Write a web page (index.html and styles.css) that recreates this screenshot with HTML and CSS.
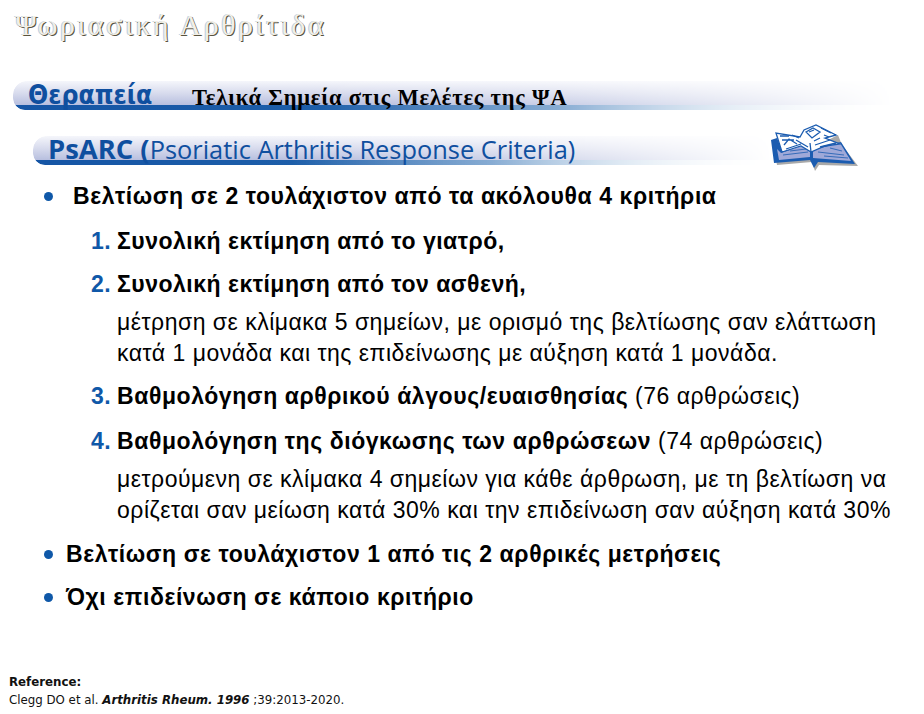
FILE: index.html
```html
<!DOCTYPE html>
<html lang="el">
<head>
<meta charset="utf-8">
<title>Ψωριασική Αρθρίτιδα</title>
<link rel="stylesheet" href="styles.css">
</head>
<body>
<div class="slide">
  <h1 class="title">Ψωριασική Αρθρίτιδα</h1>
  <div class="band band-main">
    <span class="band-heading">Θεραπεία</span>
    <span class="band-sub">Τελικά Σημεία στις Μελέτες της ΨΑ</span>
  </div>
  <div class="band band-second">
    <span class="second-text"><b>PsARC (</b>Psoriatic Arthritis Response Criteria)</span>
    <svg class="book" viewBox="0 0 94 54" width="94" height="54" aria-hidden="true">
      <path d="M70 15 L74 25 L90 46 L51 45 L47 51 L44 42 L9 45 L8 40 L60 20Z" fill="#a9a9a9"/>
      <path d="M3 20 L6 43 L42 40 L46 48 L50 42 L87 44 L73 22 L45 28 L14 30 L9 18Z" fill="#1b5cb0"/>
      <path d="M9 29 L11 40 L42 37 L42 30 L33 26 L13 33Z" fill="#9fa9d8"/>
      <path d="M45 30 L45 38 L83 41 L72 23Z" fill="#9fa9d8"/>
      <path d="M8 13 L14 32 L33 26 L43 32 L57 26 L72 24 L57 18 L68 15 L48 5 L36 10 L32 17Z" fill="#fff" stroke="#1b5cb0" stroke-width="1.3"/>
      <path d="M12 16 H21 M24 15 L31 18 M14 20 H26 M16 25 L21 19 L29 24 M18 29 L33 24 M28 20 L40 27 M38 12 L45 8 L52 12 L44 18Z M41 12 L46 10 M53 8 L63 13 M46 21 L52 18 M47 25 L62 20 M52 27 L68 23 M56 15 L61 17 M43 32 L42 23" fill="none" stroke="#1b5cb0" stroke-width="1.3"/>
      <path d="M15 35 L40 32 M22 31 L38 29 M50 32 L76 35 M62 28 L74 31 M56 36 L80 38" stroke="#1b5cb0" stroke-width="0.8"/>
    </svg>
  </div>
  <ul class="points">
    <li class="point point-first"><span class="dot"></span><span class="strong">Βελτίωση σε 2 τουλάχιστον από τα ακόλουθα 4 κριτήρια</span></li>
    <li class="sub sub-loose"><span class="num">1.</span><span class="strong strong-short">Συνολική εκτίμηση από το γιατρό,</span></li>
    <li class="sub"><span class="num">2.</span><span class="strong strong-short">Συνολική εκτίμηση από τον ασθενή,</span></li>
    <li class="note">μέτρηση σε κλίμακα 5 σημείων, με ορισμό της βελτίωσης σαν ελάττωση<br>κατά 1 μονάδα και της επιδείνωσης με αύξηση κατά 1 μονάδα.</li>
    <li class="sub sub-tight"><span class="num">3.</span><span><span class="strong">Βαθμολόγηση αρθρικού άλγους/ευαισθησίας</span> (76 αρθρώσεις)</span></li>
    <li class="sub sub-loose"><span class="num">4.</span><span><span class="strong">Βαθμολόγηση της διόγκωσης των αρθρώσεων</span> (74 αρθρώσεις)</span></li>
    <li class="note">μετρούμενη σε κλίμακα 4 σημείων για κάθε άρθρωση, με τη βελτίωση να<br>ορίζεται σαν μείωση κατά 30% και την επιδείνωση σαν αύξηση κατά 30%</li>
    <li class="point point-tight"><span class="dot"></span><span class="strong">Βελτίωση σε τουλάχιστον 1 από τις 2 αρθρικές μετρήσεις</span></li>
    <li class="point point-tight"><span class="dot"></span><span class="strong">Όχι επιδείνωση σε κάποιο κριτήριο</span></li>
  </ul>
  <footer class="reference">
    <div class="ref-label">Reference:</div>
    <div>Clegg DO et al. <b><i>Arthritis Rheum. 1996</i></b> ;39:2013-2020.</div>
  </footer>
</div>
</body>
</html>
```
FILE: styles.css
```css
html, body {
  margin: 0;
  padding: 0;
  background: #fff;
}
.slide {
  width: 924px;
  height: 714px;
  overflow: hidden;
  font-family: "Liberation Sans", Arial, sans-serif;
  color: #000;
  display: flex;
  flex-direction: column;
}
.title {
  margin: 9px 0 0 15px;
  height: 72px;
  font: 400 30px/32px "Liberation Serif", serif;
  letter-spacing: 2.5px;
  color: #f2efe6;
  text-shadow: 1px 1px 0 #57523f, -1px 0 0 #b9cde6;
}
.band {
  position: relative;
  display: flex;
  align-items: center;
  height: 29px;
  box-sizing: border-box;
}
.band::before {
  content: "";
  position: absolute;
  inset: 0;
  border-radius: 14px 0 0 12px;
  background:
    linear-gradient(90deg, #1555a5 0%, #1d5ea9 35%, #5f90c4 62%, #b9d0e6 82%, #fff 100%) left bottom / 100% 5px no-repeat,
    linear-gradient(180deg, #f5f6fb 0%, #d5d9ec 45%, #aab3d9 100%);
  -webkit-mask-image: linear-gradient(90deg, #000 0%, #000 35%, rgba(0,0,0,0.75) 62%, rgba(0,0,0,0) 100%);
  mask-image: linear-gradient(90deg, #000 0%, #000 35%, rgba(0,0,0,0.75) 62%, rgba(0,0,0,0) 100%);
}
.band > * {
  position: relative;
}
.band-main {
  margin-left: 13px;
  width: 880px;
}
.band-heading {
  margin-left: 15px;
  width: 164px;
  font: 700 26.4px/29px "DejaVu Sans", Verdana, sans-serif;
  font-stretch: condensed;
  color: #0f4f9f;
  transform: translateY(-1px);
}
.band-sub {
  font: 700 22.5px/29px "Liberation Serif", serif;
  letter-spacing: 0.8px;
  color: #000;
  transform: translateY(2px);
}
.band-second {
  margin: 26px 0 0 33px;
  width: 740px;
}
.second-text {
  margin-left: 15px;
  font: 400 25.4px/29px "Open Sans", sans-serif;
  color: #0f4f9f;
  white-space: nowrap;
  transform: translateY(-2px);
}
.second-text b {
  font-weight: 700;
  font-size: 27.4px;
}
.band > .book {
  position: absolute;
  left: 735px;
  top: -16px;
}
.points {
  list-style: none;
  margin: 0;
  padding: 0;
  display: flex;
  flex-direction: column;
  font-size: 23px;
  line-height: 30px;
  letter-spacing: 0.5px;
}
.strong {
  font-weight: 700;
  letter-spacing: 0.57px;
}
.strong-short {
  letter-spacing: 0.5px;
}
.point {
  display: flex;
  align-items: center;
  margin-left: 44px;
}
.point-first {
  margin-top: 16px;
}
.point-first .dot {
  margin-right: 20px;
}
.point-tight {
  margin-top: 13px;
}
.point-tight .dot {
  margin-right: 13px;
}
.dot {
  width: 9px;
  height: 9px;
  border-radius: 50%;
  background: #0f58a8;
  flex: none;
}
.sub {
  display: flex;
  margin: 13px 0 0 91px;
}
.sub-loose {
  margin-top: 15px;
}
.sub-tight {
  margin-top: 12px;
}
.num {
  width: 26px;
  font-weight: 700;
  color: #0f58a8;
  flex: none;
}
.note {
  margin: 8px 0 0 117px;
  line-height: 31px;
}
.reference {
  margin: auto 0 5px 9px;
  font: 11.8px/18px "DejaVu Sans", Verdana, sans-serif;
  color: #111;
}
.ref-label {
  font-weight: 700;
}
```
